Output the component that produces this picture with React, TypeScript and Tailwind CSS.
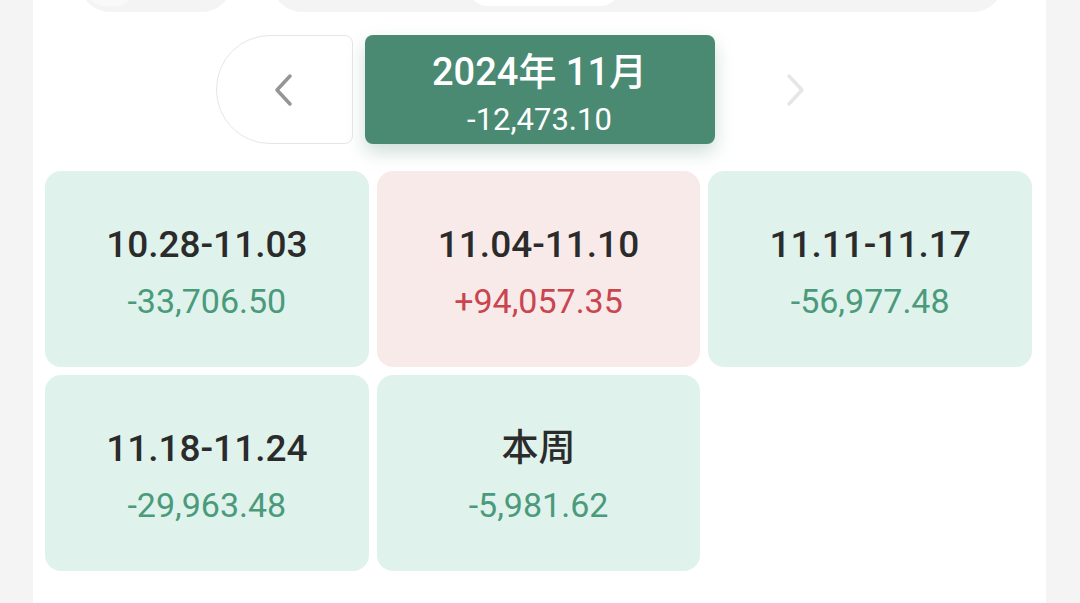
const weeks = [
    { range: "10.28-11.03", amount: "-33,706.50", up: false },
    { range: "11.04-11.10", amount: "+94,057.35", up: true },
    { range: "11.11-11.17", amount: "-56,977.48", up: false },
    { range: "11.18-11.24", amount: "-29,963.48", up: false },
    { range: "本周", amount: "-5,981.62", up: false },
];

const font = {
    fontFamily: '"Roboto", "Noto Sans CJK SC", sans-serif',
};

const Chevron = ({ dir, color }: { dir: "left" | "right"; color: string }) => (
    <svg width="26" height="36" viewBox="0 0 26 36" fill="none">
        <polyline
            points={dir === "left" ? "19,4 6,18 19,32" : "7,4 20,18 7,32"}
            stroke={color}
            strokeWidth="3.5"
            strokeLinecap="round"
            strokeLinejoin="round"
        />
    </svg>
);

const WeekCard = ({ range, amount, up }: { range: string; amount: string; up: boolean }) => {
    return (
        <div
            className={
                up
                    ? "h-[196px] rounded-[16px] bg-[#f9eaea] flex flex-col items-center pt-[52px] gap-[14px]"
                    : "h-[196px] rounded-[16px] bg-[#dff3ec] flex flex-col items-center pt-[52px] gap-[14px]"
            }
        >
            <span className="text-[37px] leading-[44px] font-medium text-[#2b2b2b]">{range}</span>
            <span
                className={
                    up
                        ? "text-[34px] leading-[40px] text-[#c9454f]"
                        : "text-[34px] leading-[40px] text-[#4a9a7b]"
                }
            >
                {amount}
            </span>
        </div>
    );
};

export default function App() {
    return (
        <div className="min-h-screen bg-[#f4f4f4] pl-[33px] pr-[34px]" style={font}>
            <div className="bg-white min-h-[603px] px-[12px] pb-[30px]">
                {/* tabs cut off at the top */}
                <div className="h-[12px] flex items-end">
                    <div className="h-[60px] w-[152px] shrink-0 ml-[35px] rounded-full bg-[#f4f4f4] flex items-end pl-[5px] pb-[6px]">
                        <div className="h-[40px] w-[50px] rounded-full bg-[#f9f9f9]" />
                    </div>
                    <div className="h-[60px] w-[731px] shrink-0 ml-[40px] rounded-full bg-[#f4f4f4] flex items-end pl-[196px] pb-[6px]">
                        <div className="h-[40px] w-[152px] rounded-full bg-white" />
                    </div>
                </div>

                {/* month switcher */}
                <div className="flex justify-center gap-[12px] mt-[23px]">
                    <button className="w-[137px] h-[109px] rounded-l-[54px] rounded-r-[8px] border border-[#e6e6e6] bg-white flex items-center justify-center">
                        <Chevron dir="left" color="#959595" />
                    </button>
                    <div className="w-[350px] h-[109px] rounded-[8px] bg-[#4a8a72] shadow-[0_8px_18px_rgba(74,138,114,0.28)] flex flex-col items-center pt-[15px] gap-[8px] text-white">
                        <span className="text-[38px] leading-[44px] font-medium">2024年 11月</span>
                        <span className="text-[31px] leading-[36px]">-12,473.10</span>
                    </div>
                    <button className="w-[137px] h-[109px] flex items-center justify-center">
                        <Chevron dir="right" color="#e6e6e6" />
                    </button>
                </div>

                {/* weeks */}
                <div className="grid grid-cols-3 gap-[8px] mt-[27px] pr-[2px]">
                    {weeks.map((w) => (
                        <WeekCard key={w.range} range={w.range} amount={w.amount} up={w.up} />
                    ))}
                </div>
            </div>
        </div>
    );
}
